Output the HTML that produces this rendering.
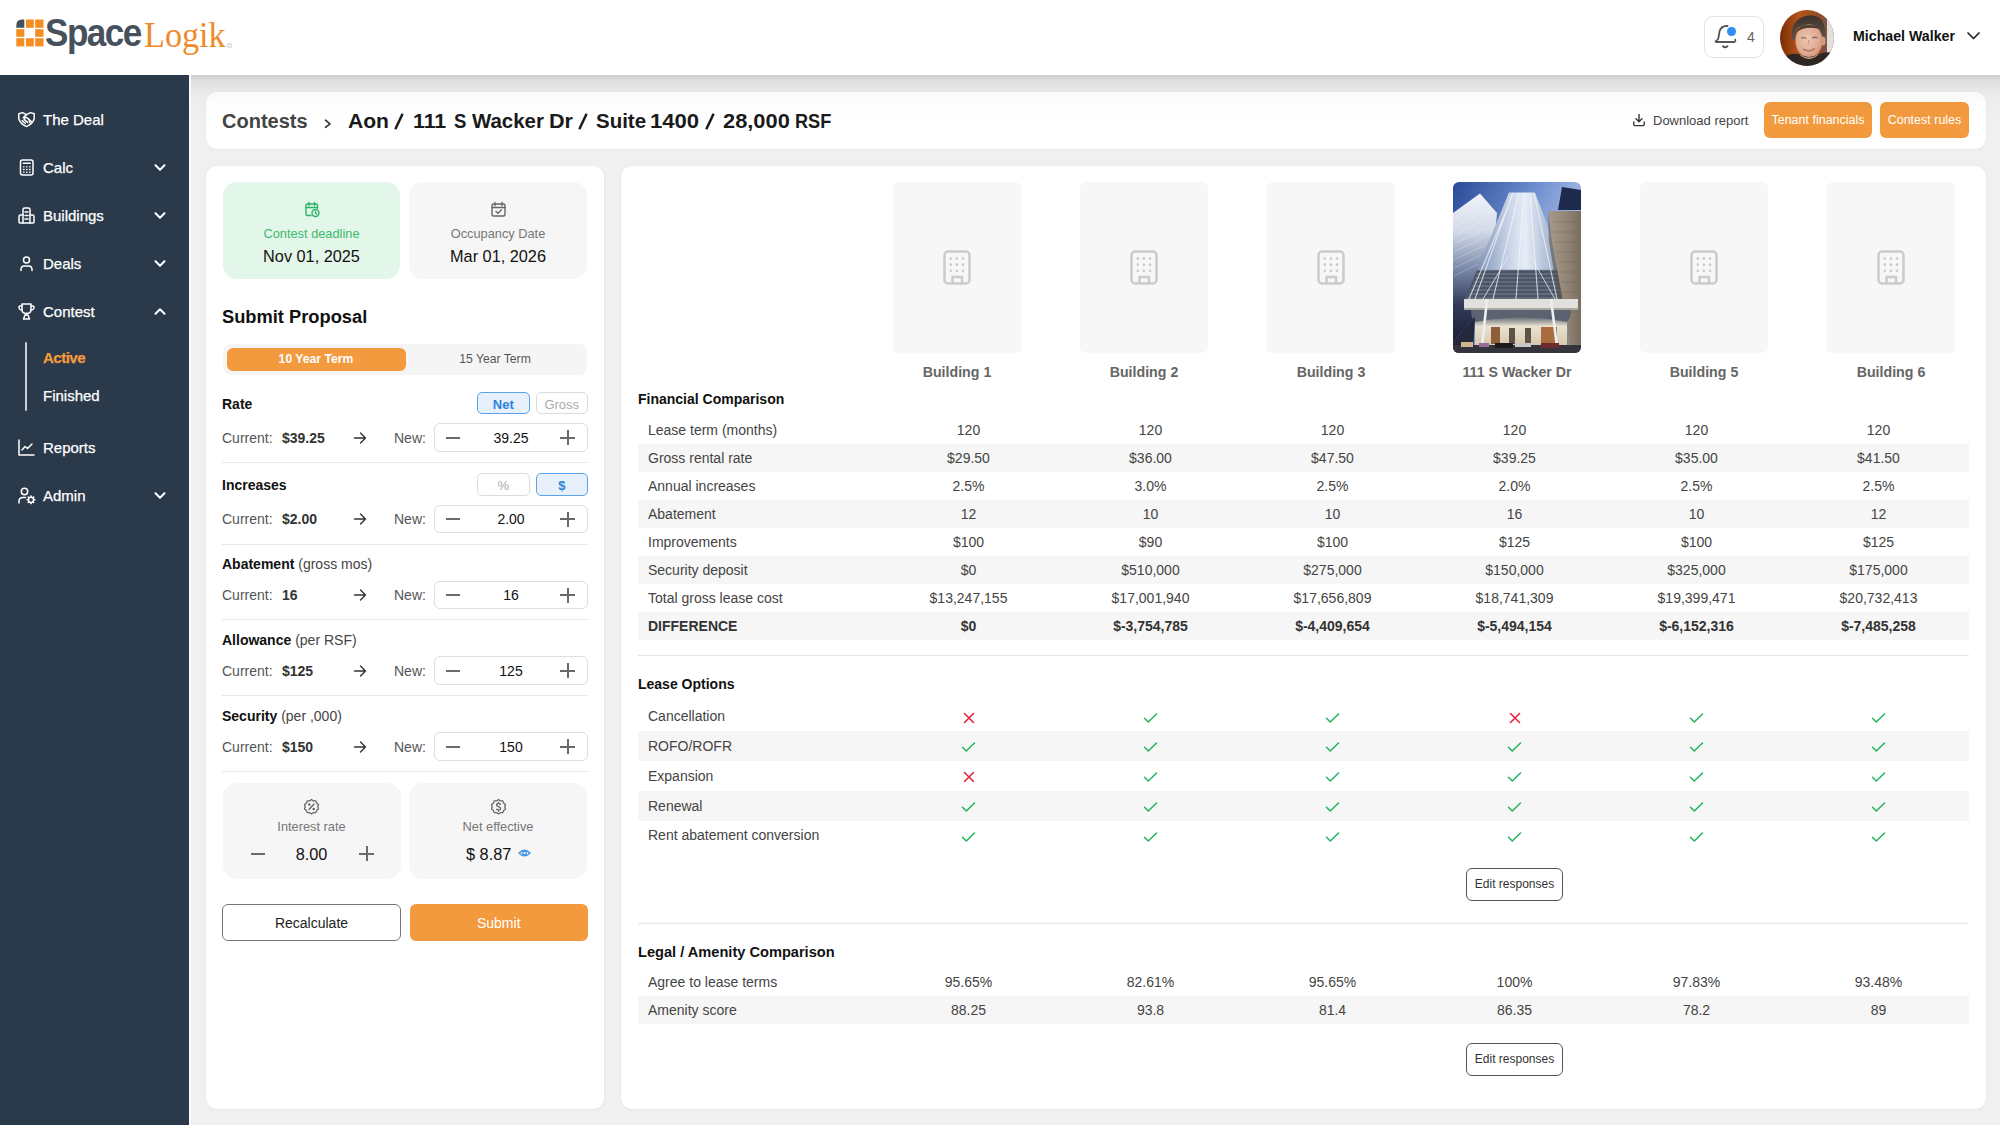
<!DOCTYPE html>
<html><head><meta charset="utf-8">
<style>
*{box-sizing:border-box;margin:0;padding:0}
html,body{width:2000px;height:1125px;overflow:hidden;background:#f0f0f0;font-family:"Liberation Sans",sans-serif;color:#222}
.a{position:absolute}
.t{position:absolute;white-space:nowrap;line-height:1}
#hdr{left:0;top:0;width:2000px;height:75px;background:#fff;z-index:5}
#hsh{left:191px;top:75px;width:1809px;height:46px;z-index:6;pointer-events:none;background:linear-gradient(rgba(0,0,0,.125) 0px,rgba(0,0,0,.12) 2px,rgba(0,0,0,.08) 5px,rgba(0,0,0,.055) 11px,rgba(0,0,0,.033) 16px,rgba(0,0,0,.022) 19px,rgba(0,0,0,.016) 25px,rgba(0,0,0,.008) 33px,rgba(0,0,0,0) 46px)}
#side{left:0;top:75px;width:191px;height:1050px;background:#2a3a4a;border-right:2px solid #fafbfc;z-index:4}
.card{position:absolute;background:#fff;border-radius:10px;box-shadow:0 0 1px rgba(0,0,0,.12),0 1px 3px rgba(0,0,0,.03)}
.nav{position:absolute;left:43px;color:#fff;font-size:15px;line-height:1;white-space:nowrap;-webkit-text-stroke:0.25px currentColor}
.chev{position:absolute;left:154px;width:12px;height:8px}
.ico{position:absolute;left:17px;width:18px;height:18px}
</style></head><body>

<div id="hdr" class="a">
  <!-- logo -->
  <svg class="a" style="left:16px;top:19px" width="28" height="28" viewBox="0 0 28 28">
    <path d="M6 0.5H8.3V8.8H0.3V6.5Q0.3 0.5 6 0.5Z" fill="#46515c"/>
    <g fill="#f68d22">
    <rect x="10" y="0.5" width="7.8" height="8.3"/><rect x="19.2" y="0.5" width="8.3" height="8.3"/>
    <rect x="0.3" y="10.2" width="8" height="7.6"/><rect x="19.2" y="10.2" width="8.3" height="7.6"/>
    <rect x="0.3" y="19.2" width="8" height="8.2"/><rect x="10" y="19.2" width="7.8" height="8.2"/><rect x="19.2" y="19.2" width="8.3" height="8.2"/>
    </g>
  </svg>
  <div class="t" style="left:45px;top:13px;font-size:39px;font-weight:bold;color:#46515c;letter-spacing:-1.7px;transform:scaleX(0.9);transform-origin:0 0">Space</div>
  <div class="t" style="left:144px;top:17px;font-family:'Liberation Serif',serif;font-size:36px;color:#ef8a2b;transform:scaleX(0.95);transform-origin:0 0">Logik</div>
  <svg class="a" style="left:226px;top:42px" width="7" height="7" viewBox="0 0 7 7"><circle cx="3.5" cy="3.5" r="2.3" fill="none" stroke="#c8c8c8" stroke-width="0.8"/><path d="M2.7 4.8V2.3H3.8Q4.5 2.3 4.5 3Q4.5 3.6 3.8 3.6H2.7M3.7 3.6L4.5 4.8" stroke="#d0d0d0" stroke-width="0.5" fill="none"/></svg>

  <!-- notification -->
  <div class="a" style="left:1704px;top:16px;width:60px;height:42px;border:1px solid #e4e4e4;border-radius:9px;"></div>
  <svg class="a" style="left:1700px;top:12px" width="70" height="50" viewBox="0 0 70 50" fill="none" stroke="#555" stroke-width="1.8" stroke-linecap="round" stroke-linejoin="round">
    <path d="M27.5 14Q21 13.6 19.5 19.5L18.6 25.2Q18.2 28.2 16 29Q15 29.9 16.6 30H34Q35.6 29.9 35.3 27.6"/>
    <path d="M23 34.2Q25.2 36.3 27.4 34.2" stroke-width="2"/>
  </svg>
  <div class="a" style="left:1727px;top:27px;width:8.8px;height:9px;border-radius:50%;background:#2f8ff0"></div>
  <div class="t" style="left:1747px;top:30px;font-size:14px;color:#606060">4</div>

  <!-- avatar -->
  <div class="a" style="left:1780px;top:10px;width:54px;height:56px;border-radius:50%;overflow:hidden">
  <svg width="54" height="56" viewBox="0 0 54 56">
   <defs>
    <linearGradient id="wood" x1="0" y1="0" x2="1" y2="0"><stop offset="0" stop-color="#7a2c06"/><stop offset=".35" stop-color="#b4561c"/><stop offset=".8" stop-color="#8a4a2a"/><stop offset="1" stop-color="#6c4636"/></linearGradient>
    <radialGradient id="skin" cx=".45" cy=".45" r=".6"><stop offset="0" stop-color="#efc6b2"/><stop offset=".7" stop-color="#e0ab92"/><stop offset="1" stop-color="#c98d72"/></radialGradient>
    <linearGradient id="hair" x1="0" y1="0" x2="0" y2="1"><stop offset="0" stop-color="#3e322c"/><stop offset="1" stop-color="#5e524a"/></linearGradient>
   </defs>
   <rect width="54" height="56" fill="url(#wood)"/>
   <rect x="46" y="0" width="8" height="56" fill="#e3e0db"/>
   <rect x="43" y="0" width="4" height="46" fill="#7a5646"/>
   <path d="M12 30Q10 14 20 8Q29 3 38 7Q46 11 45 28L42 26Q41 17 33 15Q24 14 17 18Q15 22 15 30Z" fill="url(#hair)"/>
   <ellipse cx="29" cy="31" rx="13.5" ry="16.5" fill="url(#skin)"/>
   <path d="M15.5 24Q18 15 28 15Q38 14 42 22Q40 18 33 18Q24 17 17 22Z" fill="#4a3e37"/>
   <ellipse cx="43" cy="31" rx="2.5" ry="4.5" fill="#d49a80"/>
   <path d="M21 28Q24 27 26.5 28.5M32 28Q35 26.5 37.5 28" stroke="#8a6a60" stroke-width="1.3" fill="none"/>
   <path d="M29 30L28 35" stroke="#c9907a" stroke-width="1" fill="none"/>
   <path d="M23 39Q29 43 35 38.5" stroke="#b87a6c" stroke-width="1.6" fill="none"/>
   <path d="M0 56V49Q9 43 19 44Q29 50 39 44Q47 41 54 43V56Z" fill="#2e2622"/>
   <path d="M19 44Q29 51 39 44L37 46Q29 52 21 46Z" fill="#d9a58c"/>
  </svg>
  </div>
  <div class="t" style="left:1853px;top:29px;font-size:14.2px;font-weight:bold;color:#111">Michael Walker</div>
  <svg class="a" style="left:1966px;top:31px" width="15" height="10" viewBox="0 0 15 10" fill="none" stroke="#222" stroke-width="1.7" stroke-linecap="round" stroke-linejoin="round"><path d="M2 2L7.5 7.5L13 2"/></svg>
</div>

<div id="side" class="a">
<div class="nav" style="top:36.9px;color:#fff;font-weight:normal">The Deal</div><svg class="a" style="left:17px;top:34.9px" width="19" height="19" viewBox="0 0 19 19" fill="none" stroke="#fff" stroke-width="1.5" stroke-linecap="round" stroke-linejoin="round"><path d="M1.8 3.8L5.5 2.6L9.5 4.6L13.5 2.6L17.2 3.8V8.8Q16 13.5 9.5 16.6Q3 13.5 1.8 8.8Z"/><path d="M9.5 4.6L6.3 7.6Q7.6 8.8 9.3 7.3L14.3 11.5M5.2 10.6L8.3 13.3M7.2 9.4L10.6 12.4M11.8 8.9L12.8 12.6"/></svg><div class="nav" style="top:84.9px;color:#fff;font-weight:normal">Calc</div><svg class="a" style="left:17px;top:82.9px" width="19" height="19" viewBox="0 0 19 19" fill="none" stroke="#fff" stroke-width="1.5" stroke-linecap="round" stroke-linejoin="round"><rect x="3.5" y="2" width="12.5" height="15" rx="2"/><path d="M6.3 5.3H13.2"/><path d="M6.5 8.8h.6M9.5 8.8h.6M12.5 8.8h.6M6.5 11.5h.6M9.5 11.5h.6M12.5 11.5h.6M6.5 14.2h.6M9.5 14.2h.6M12.5 14.2h.6" stroke-width="1.3"/></svg><svg class="a" style="left:153px;top:87.9px" width="14" height="9" viewBox="0 0 14 9" fill="none" stroke="#fff" stroke-width="2" stroke-linecap="round" stroke-linejoin="round"><path d="M2.5 2.2L7 6.8L11.5 2.2"/></svg><div class="nav" style="top:132.9px;color:#fff;font-weight:normal">Buildings</div><svg class="a" style="left:17px;top:130.9px" width="19" height="19" viewBox="0 0 19 19" fill="none" stroke="#fff" stroke-width="1.5" stroke-linecap="round" stroke-linejoin="round"><path d="M6 17V3.5Q6 2 7.5 2H11.5Q13 2 13 3.5V17"/><path d="M6 9H3.5Q2 9 2 10.5V16Q2 17 3 17H16Q17 17 17 16V10.5Q17 9 15.5 9H13"/><path d="M8 6H11M8 9.5H11M8 13H11"/></svg><svg class="a" style="left:153px;top:135.9px" width="14" height="9" viewBox="0 0 14 9" fill="none" stroke="#fff" stroke-width="2" stroke-linecap="round" stroke-linejoin="round"><path d="M2.5 2.2L7 6.8L11.5 2.2"/></svg><div class="nav" style="top:180.9px;color:#fff;font-weight:normal">Deals</div><svg class="a" style="left:17px;top:178.9px" width="19" height="19" viewBox="0 0 19 19" fill="none" stroke="#fff" stroke-width="1.5" stroke-linecap="round" stroke-linejoin="round"><circle cx="9.5" cy="6" r="3"/><path d="M4 16.5V15.5Q4 12 7.5 12H11.5Q15 12 15 15.5V16.5"/></svg><svg class="a" style="left:153px;top:183.9px" width="14" height="9" viewBox="0 0 14 9" fill="none" stroke="#fff" stroke-width="2" stroke-linecap="round" stroke-linejoin="round"><path d="M2.5 2.2L7 6.8L11.5 2.2"/></svg><div class="nav" style="top:228.9px;color:#fff;font-weight:normal">Contest</div><svg class="a" style="left:17px;top:226.9px" width="19" height="19" viewBox="0 0 19 19" fill="none" stroke="#fff" stroke-width="1.5" stroke-linecap="round" stroke-linejoin="round"><path d="M5 2H14V7.5Q14 11.5 9.5 11.5Q5 11.5 5 7.5Z"/><path d="M5 4H3Q1.8 4 2 5.5Q2.3 8 5 8M14 4H16Q17.2 4 17 5.5Q16.7 8 14 8"/><path d="M9.5 11.5V13M6.5 17H12.5L11 13H8Z"/></svg><svg class="a" style="left:153px;top:231.9px" width="14" height="9" viewBox="0 0 14 9" fill="none" stroke="#fff" stroke-width="2" stroke-linecap="round" stroke-linejoin="round"><path d="M2.5 6.8L7 2.2L11.5 6.8"/></svg><div class="a" style="left:25px;top:267px;width:2px;height:69px;background:#c9ced4;border-radius:1px"></div><div class="nav" style="top:275.2px;color:#f39a3b;font-weight:bold;letter-spacing:-0.5px">Active</div><div class="nav" style="top:312.5px">Finished</div><div class="nav" style="top:364.9px;color:#fff;font-weight:normal">Reports</div><svg class="a" style="left:17px;top:362.9px" width="19" height="19" viewBox="0 0 19 19" fill="none" stroke="#fff" stroke-width="1.5" stroke-linecap="round" stroke-linejoin="round"><path d="M2 2V17H17"/><path d="M5 12L8 8.5L10.5 10.5L15 6"/></svg><div class="nav" style="top:413.0px;color:#fff;font-weight:normal">Admin</div><svg class="a" style="left:17px;top:411.0px" width="19" height="19" viewBox="0 0 19 19" fill="none" stroke="#fff" stroke-width="1.5" stroke-linecap="round" stroke-linejoin="round"><circle cx="7.5" cy="5.5" r="3.2"/><path d="M2 17V15.5Q2 11.5 6 11.5H8.5"/><circle cx="14" cy="13.8" r="2.6"/><path d="M14 10V10.6M14 17V17.6M10.2 13.8H10.8M17.2 13.8H17.8M11.3 11.1L11.7 11.5M16.3 16.1L16.7 16.5M11.3 16.5L11.7 16.1M16.3 11.5L16.7 11.1" stroke-width="1.6"/></svg><svg class="a" style="left:153px;top:416.0px" width="14" height="9" viewBox="0 0 14 9" fill="none" stroke="#fff" stroke-width="2" stroke-linecap="round" stroke-linejoin="round"><path d="M2.5 2.2L7 6.8L11.5 2.2"/></svg>
</div>

<!-- breadcrumb card -->
<div class="card" style="left:206px;top:92px;width:1780px;height:57px;"></div>
<div class="t" style="left:222px;top:110.5px;font-size:20px;font-weight:bold;color:#444">Contests</div>
<svg class="a" style="left:321px;top:115px" width="12" height="15" viewBox="0 0 12 15" fill="none" stroke="#333" stroke-width="1.7" stroke-linecap="round" stroke-linejoin="round"><path d="M4.5 5.2L9 8.8L4.5 12.3"/></svg>
<div class="t" style="left:347.7px;top:110.5px;font-size:20px;font-weight:bold;color:#1a1a1a;transform:scaleX(1.054);transform-origin:0 0">Aon</div><div class="t" style="left:413.0px;top:110.5px;font-size:20px;font-weight:bold;color:#1a1a1a;transform:scaleX(1.063);transform-origin:0 0">111</div><div class="t" style="left:453.5px;top:110.5px;font-size:20px;font-weight:bold;color:#1a1a1a;transform:scaleX(0.925);transform-origin:0 0">S</div><div class="t" style="left:472.0px;top:110.5px;font-size:20px;font-weight:bold;color:#1a1a1a;transform:scaleX(1.021);transform-origin:0 0">Wacker</div><div class="t" style="left:548.9px;top:110.5px;font-size:20px;font-weight:bold;color:#1a1a1a;transform:scaleX(1.081);transform-origin:0 0">Dr</div><div class="t" style="left:596.2px;top:110.5px;font-size:20px;font-weight:bold;color:#1a1a1a;transform:scaleX(1.023);transform-origin:0 0">Suite</div><div class="t" style="left:650.0px;top:110.5px;font-size:20px;font-weight:bold;color:#1a1a1a;transform:scaleX(1.105);transform-origin:0 0">1400</div><div class="t" style="left:722.8px;top:110.5px;font-size:20px;font-weight:bold;color:#1a1a1a;transform:scaleX(1.092);transform-origin:0 0">28,000</div><div class="t" style="left:794.5px;top:110.5px;font-size:20px;font-weight:bold;color:#1a1a1a;transform:scaleX(0.908);transform-origin:0 0">RSF</div><svg class="a" style="left:394px;top:113px" width="10" height="17" viewBox="0 0 10 17"><path d="M1.3 16.2L8.6 0.8" stroke="#1a1a1a" stroke-width="2.5" stroke-linecap="butt"/></svg><svg class="a" style="left:578px;top:113px" width="10" height="17" viewBox="0 0 10 17"><path d="M1.3 16.2L8.6 0.8" stroke="#1a1a1a" stroke-width="2.5" stroke-linecap="butt"/></svg><svg class="a" style="left:705px;top:113px" width="10" height="17" viewBox="0 0 10 17"><path d="M1.3 16.2L8.6 0.8" stroke="#1a1a1a" stroke-width="2.5" stroke-linecap="butt"/></svg>
<svg class="a" style="left:1632px;top:113px" width="14" height="14" viewBox="0 0 14 14" fill="none" stroke="#333" stroke-width="1.4" stroke-linecap="round" stroke-linejoin="round"><path d="M7 1.5V8.5M4 5.8L7 8.8L10 5.8M1.8 9V11.6Q1.8 12.6 2.8 12.6H11.2Q12.2 12.6 12.2 11.6V9"/></svg>
<div class="t" style="left:1653px;top:113.5px;font-size:13px;color:#444">Download report</div>
<div class="a" style="left:1764px;top:102px;width:108px;height:36px;border-radius:6px;background:#f39a3e"></div>
<div class="t" style="left:1764px;top:113.5px;width:108px;text-align:center;font-size:12.5px;color:#fff">Tenant financials</div>
<div class="a" style="left:1880px;top:102px;width:89px;height:36px;border-radius:6px;background:#f39a3e"></div>
<div class="t" style="left:1880px;top:113.5px;width:89px;text-align:center;font-size:12.5px;color:#fff">Contest rules</div>

<!-- left card -->
<div class="card" style="left:206px;top:166px;width:398px;height:943px;"></div>

<div class="a" style="left:223px;top:182px;width:177px;height:97px;background:#e3f6ea;border-radius:14px"></div>
<div class="a" style="left:409px;top:182px;width:178px;height:97px;background:#f6f6f6;border-radius:14px"></div>
<svg class="a" style="left:304px;top:201px" width="17" height="17" viewBox="0 0 17 17" fill="none" stroke="#2fb463" stroke-width="1.4" stroke-linecap="round" stroke-linejoin="round"><path d="M7 14.5H3.5Q2 14.5 2 13V4.5Q2 3 3.5 3H12Q13.5 3 13.5 4.5V7"/><path d="M5 1.5V4.5M10.5 1.5V4.5M2 6.5H13.5"/><circle cx="11.5" cy="12" r="3.5"/><path d="M11.5 10.5V12L12.5 12.8"/></svg>
<svg class="a" style="left:490px;top:201px" width="17" height="17" viewBox="0 0 17 17" fill="none" stroke="#666" stroke-width="1.4" stroke-linecap="round" stroke-linejoin="round"><rect x="2" y="3" width="13" height="12" rx="1.5"/><path d="M5 1.5V4.5M12 1.5V4.5M2 6.5H15M6 10.5L8 12.3L11.3 9"/></svg>
<div class="t" style="left:223px;width:177px;text-align:center;top:228.2px;font-size:12.8px;color:#3cba6b;font-weight:normal;">Contest deadline</div>
<div class="t" style="left:409px;width:178px;text-align:center;top:228.2px;font-size:12.8px;color:#777;font-weight:normal;">Occupancy Date</div>
<div class="t" style="left:223px;width:177px;text-align:center;top:248.0px;font-size:16.3px;color:#111;font-weight:normal;">Nov 01, 2025</div>
<div class="t" style="left:409px;width:178px;text-align:center;top:248.0px;font-size:16.3px;color:#111;font-weight:normal;">Mar 01, 2026</div>
<div class="t" style="left:222px;top:308.4px;font-size:18.3px;color:#111;font-weight:bold;">Submit Proposal</div>
<div class="a" style="left:223px;top:344px;width:364px;height:31px;background:#f5f5f5;border-radius:8px"></div>
<div class="a" style="left:226.5px;top:347.5px;width:179px;height:23px;background:#f39a3e;border-radius:6px"></div>
<div class="t" style="left:226px;width:180px;text-align:center;top:353.1px;font-size:12.2px;color:#fff;font-weight:bold;">10 Year Term</div>
<div class="t" style="left:406px;width:178px;text-align:center;top:353.1px;font-size:12.2px;color:#555;font-weight:normal;">15 Year Term</div>
<div class="t" style="left:222px;top:397.0px;font-size:14px;color:#111;font-weight:bold;">Rate</div>
<div class="a" style="left:477px;top:391.8px;width:52.5px;height:22.5px;background:#e7f0fb;border:1.5px solid #5aa2ea;border-radius:5px"></div>
<div class="t" style="left:477px;width:52.5px;text-align:center;top:397.5px;font-size:13px;color:#2b83dd;font-weight:bold;">Net</div>
<div class="a" style="left:535.5px;top:391.8px;width:52.5px;height:22.5px;background:#fff;border:1px solid #dcdcdc;border-radius:5px"></div>
<div class="t" style="left:535.5px;width:52.5px;text-align:center;top:397.5px;font-size:13px;color:#aaa;font-weight:normal;">Gross</div>
<div class="t" style="left:222px;top:431.0px;font-size:14px;color:#555;font-weight:normal;">Current:</div>
<div class="t" style="left:282px;top:431.0px;font-size:14px;color:#333;font-weight:bold;">$39.25</div>
<svg class="a" style="left:353px;top:431.0px" width="14" height="14" viewBox="0 0 14 14" fill="none" stroke="#333" stroke-width="1.4" stroke-linecap="round" stroke-linejoin="round"><path d="M1.5 7H12.5M7.5 2L12.5 7L7.5 12"/></svg>
<div class="t" style="left:394px;top:431.0px;font-size:14px;color:#555;font-weight:normal;">New:</div>
<div class="a" style="left:434px;top:423px;width:154px;height:28.5px;border:1px solid #dedede;border-radius:6px;background:#fff"></div>
<div class="a" style="left:446px;top:437px;width:14px;height:1.5px;background:#6a6a6a"></div>
<div class="t" style="left:434px;width:154px;text-align:center;top:431.0px;font-size:14px;color:#111;font-weight:normal;">39.25</div>
<div class="a" style="left:560px;top:437px;width:15px;height:1.5px;background:#6a6a6a"></div><div class="a" style="left:567px;top:430px;width:1.5px;height:15px;background:#6a6a6a"></div>
<div class="a" style="left:222px;top:462px;width:366px;height:1px;background:#e9e9e9"></div>
<div class="t" style="left:222px;top:478.3px;font-size:14px;color:#111;font-weight:bold;">Increases</div>
<div class="a" style="left:477px;top:473.4px;width:52.5px;height:22.5px;background:#fff;border:1px solid #dcdcdc;border-radius:5px"></div>
<div class="t" style="left:477px;width:52.5px;text-align:center;top:478.8px;font-size:13px;color:#aaa;font-weight:normal;">%</div>
<div class="a" style="left:535.5px;top:473.4px;width:52.5px;height:22.5px;background:#e7f0fb;border:1.5px solid #5aa2ea;border-radius:5px"></div>
<div class="t" style="left:535.5px;width:52.5px;text-align:center;top:478.8px;font-size:13px;color:#2b83dd;font-weight:bold;">$</div>
<div class="t" style="left:222px;top:512.3px;font-size:14px;color:#555;font-weight:normal;">Current:</div>
<div class="t" style="left:282px;top:512.3px;font-size:14px;color:#333;font-weight:bold;">$2.00</div>
<svg class="a" style="left:353px;top:512.3px" width="14" height="14" viewBox="0 0 14 14" fill="none" stroke="#333" stroke-width="1.4" stroke-linecap="round" stroke-linejoin="round"><path d="M1.5 7H12.5M7.5 2L12.5 7L7.5 12"/></svg>
<div class="t" style="left:394px;top:512.3px;font-size:14px;color:#555;font-weight:normal;">New:</div>
<div class="a" style="left:434px;top:504.5px;width:154px;height:28.5px;border:1px solid #dedede;border-radius:6px;background:#fff"></div>
<div class="a" style="left:446px;top:518px;width:14px;height:1.5px;background:#6a6a6a"></div>
<div class="t" style="left:434px;width:154px;text-align:center;top:512.3px;font-size:14px;color:#111;font-weight:normal;">2.00</div>
<div class="a" style="left:560px;top:518px;width:15px;height:1.5px;background:#6a6a6a"></div><div class="a" style="left:567px;top:512px;width:1.5px;height:15px;background:#6a6a6a"></div>
<div class="a" style="left:222px;top:543.5px;width:366px;height:1px;background:#e9e9e9"></div>
<div class="t" style="left:222px;top:557.3px;font-size:14px;color:#111"><b>Abatement</b> <span style="color:#444">(gross mos)</span></div>
<div class="t" style="left:222px;top:588.2px;font-size:14px;color:#555;font-weight:normal;">Current:</div>
<div class="t" style="left:282px;top:588.2px;font-size:14px;color:#333;font-weight:bold;">16</div>
<svg class="a" style="left:353px;top:588.2px" width="14" height="14" viewBox="0 0 14 14" fill="none" stroke="#333" stroke-width="1.4" stroke-linecap="round" stroke-linejoin="round"><path d="M1.5 7H12.5M7.5 2L12.5 7L7.5 12"/></svg>
<div class="t" style="left:394px;top:588.2px;font-size:14px;color:#555;font-weight:normal;">New:</div>
<div class="a" style="left:434px;top:580.5px;width:154px;height:28.5px;border:1px solid #dedede;border-radius:6px;background:#fff"></div>
<div class="a" style="left:446px;top:594px;width:14px;height:1.5px;background:#6a6a6a"></div>
<div class="t" style="left:434px;width:154px;text-align:center;top:588.2px;font-size:14px;color:#111;font-weight:normal;">16</div>
<div class="a" style="left:560px;top:594px;width:15px;height:1.5px;background:#6a6a6a"></div><div class="a" style="left:567px;top:588px;width:1.5px;height:15px;background:#6a6a6a"></div>
<div class="a" style="left:222px;top:619px;width:366px;height:1px;background:#e9e9e9"></div>
<div class="t" style="left:222px;top:633.2px;font-size:14px;color:#111"><b>Allowance</b> <span style="color:#444">(per RSF)</span></div>
<div class="t" style="left:222px;top:663.5px;font-size:14px;color:#555;font-weight:normal;">Current:</div>
<div class="t" style="left:282px;top:663.5px;font-size:14px;color:#333;font-weight:bold;">$125</div>
<svg class="a" style="left:353px;top:663.5px" width="14" height="14" viewBox="0 0 14 14" fill="none" stroke="#333" stroke-width="1.4" stroke-linecap="round" stroke-linejoin="round"><path d="M1.5 7H12.5M7.5 2L12.5 7L7.5 12"/></svg>
<div class="t" style="left:394px;top:663.5px;font-size:14px;color:#555;font-weight:normal;">New:</div>
<div class="a" style="left:434px;top:656px;width:154px;height:28.5px;border:1px solid #dedede;border-radius:6px;background:#fff"></div>
<div class="a" style="left:446px;top:670px;width:14px;height:1.5px;background:#6a6a6a"></div>
<div class="t" style="left:434px;width:154px;text-align:center;top:663.5px;font-size:14px;color:#111;font-weight:normal;">125</div>
<div class="a" style="left:560px;top:670px;width:15px;height:1.5px;background:#6a6a6a"></div><div class="a" style="left:567px;top:663px;width:1.5px;height:15px;background:#6a6a6a"></div>
<div class="a" style="left:222px;top:695px;width:366px;height:1px;background:#e9e9e9"></div>
<div class="t" style="left:222px;top:708.9px;font-size:14px;color:#111"><b>Security</b> <span style="color:#444">(per ,000)</span></div>
<div class="t" style="left:222px;top:739.5px;font-size:14px;color:#555;font-weight:normal;">Current:</div>
<div class="t" style="left:282px;top:739.5px;font-size:14px;color:#333;font-weight:bold;">$150</div>
<svg class="a" style="left:353px;top:739.5px" width="14" height="14" viewBox="0 0 14 14" fill="none" stroke="#333" stroke-width="1.4" stroke-linecap="round" stroke-linejoin="round"><path d="M1.5 7H12.5M7.5 2L12.5 7L7.5 12"/></svg>
<div class="t" style="left:394px;top:739.5px;font-size:14px;color:#555;font-weight:normal;">New:</div>
<div class="a" style="left:434px;top:732px;width:154px;height:28.5px;border:1px solid #dedede;border-radius:6px;background:#fff"></div>
<div class="a" style="left:446px;top:746px;width:14px;height:1.5px;background:#6a6a6a"></div>
<div class="t" style="left:434px;width:154px;text-align:center;top:739.5px;font-size:14px;color:#111;font-weight:normal;">150</div>
<div class="a" style="left:560px;top:746px;width:15px;height:1.5px;background:#6a6a6a"></div><div class="a" style="left:567px;top:739px;width:1.5px;height:15px;background:#6a6a6a"></div>
<div class="a" style="left:222px;top:771px;width:366px;height:1px;background:#e9e9e9"></div>
<div class="a" style="left:223px;top:782.5px;width:177.5px;height:96.5px;background:#f6f6f6;border-radius:14px"></div>
<div class="a" style="left:409px;top:782.5px;width:178px;height:96.5px;background:#f6f6f6;border-radius:14px"></div>
<svg class="a" style="left:303px;top:798px" width="17" height="17" viewBox="0 0 17 17" fill="none" stroke="#666" stroke-width="1.3" stroke-linecap="round" stroke-linejoin="round"><path d="M8.5 1.5L10.4 2.9L12.8 2.9L13.6 5.1L15.5 6.5L14.8 8.8L15.5 11L13.6 12.4L12.8 14.6L10.4 14.6L8.5 16L6.6 14.6L4.2 14.6L3.4 12.4L1.5 11L2.2 8.8L1.5 6.5L3.4 5.1L4.2 2.9L6.6 2.9Z"/><path d="M6 11.5L11 6"/><circle cx="6.3" cy="6.5" r=".6" fill="#666"/><circle cx="10.7" cy="11" r=".6" fill="#666"/></svg>
<svg class="a" style="left:490px;top:798px" width="17" height="17" viewBox="0 0 17 17" fill="none" stroke="#666" stroke-width="1.3" stroke-linecap="round" stroke-linejoin="round"><path d="M8.5 1.5L10.4 2.9L12.8 2.9L13.6 5.1L15.5 6.5L14.8 8.8L15.5 11L13.6 12.4L12.8 14.6L10.4 14.6L8.5 16L6.6 14.6L4.2 14.6L3.4 12.4L1.5 11L2.2 8.8L1.5 6.5L3.4 5.1L4.2 2.9L6.6 2.9Z"/><path d="M10.5 6.3Q10 5.5 8.5 5.5Q6.5 5.5 6.5 7Q6.5 8.3 8.5 8.6Q10.5 9 10.5 10.4Q10.5 12 8.5 12Q7 12 6.5 11.2M8.5 4.3V5.5M8.5 12V13.2"/></svg>
<div class="t" style="left:223px;width:177px;text-align:center;top:821.4px;font-size:12.8px;color:#777;font-weight:normal;">Interest rate</div>
<div class="t" style="left:409px;width:178px;text-align:center;top:821.4px;font-size:12.8px;color:#777;font-weight:normal;">Net effective</div>
<div class="t" style="left:223px;width:177px;text-align:center;top:845.6px;font-size:16.3px;color:#111;font-weight:normal;">8.00</div>
<div class="a" style="left:251px;top:853px;width:14px;height:1.5px;background:#6a6a6a"></div>
<div class="a" style="left:359px;top:853px;width:15px;height:1.5px;background:#6a6a6a"></div><div class="a" style="left:366px;top:846px;width:1.5px;height:15px;background:#6a6a6a"></div>
<div class="t" style="left:466px;top:845.6px;font-size:16.3px;color:#111;font-weight:normal;">$ 8.87</div>
<svg class="a" style="left:518px;top:847px" width="13" height="12" viewBox="0 0 13 12" fill="none" stroke="#3d93e6" stroke-width="1.3"><path d="M1 6Q6.5 0.5 12 6Q6.5 11.5 1 6Z"/><circle cx="6.5" cy="6" r="1.8"/></svg>
<div class="a" style="left:222px;top:904px;width:179px;height:37px;border:1.5px solid #777;border-radius:6px;background:#fff"></div>
<div class="t" style="left:222px;width:179px;text-align:center;top:915.6px;font-size:14px;color:#222;font-weight:normal;">Recalculate</div>
<div class="a" style="left:410px;top:904px;width:177.5px;height:37px;background:#f39a3e;border-radius:6px"></div>
<div class="t" style="left:410px;width:177.5px;text-align:center;top:915.6px;font-size:14px;color:#fff;font-weight:normal;">Submit</div>
<!-- right card -->
<div class="card" style="left:621px;top:166px;width:1365px;height:943px;"></div>

<div class="a" style="left:893px;top:182px;width:128px;height:171px;background:#f7f7f7;border-radius:6px"></div>
<svg class="a" style="left:943px;top:250px" width="29" height="36" viewBox="0 0 29 36" fill="none" stroke="#cbcbcb" stroke-width="2.5" stroke-linejoin="round"><rect x="1.5" y="1.5" width="25" height="32" rx="3.5"/><path d="M9.5 33.5V27H19V33.5"/><g fill="#cbcbcb" stroke="none"><circle cx="7.8" cy="8.6" r="1.35"/><circle cx="13.9" cy="8.6" r="1.35"/><circle cx="20" cy="8.6" r="1.35"/><circle cx="7.8" cy="14.7" r="1.35"/><circle cx="13.9" cy="14.7" r="1.35"/><circle cx="20" cy="14.7" r="1.35"/><circle cx="7.8" cy="20.8" r="1.35"/><circle cx="13.9" cy="20.8" r="1.35"/><circle cx="20" cy="20.8" r="1.35"/></g></svg>
<div class="t" style="left:853px;width:208px;text-align:center;top:364.5px;font-size:14.2px;color:#666;font-weight:bold;">Building 1</div>
<div class="a" style="left:1080px;top:182px;width:128px;height:171px;background:#f7f7f7;border-radius:6px"></div>
<svg class="a" style="left:1130px;top:250px" width="29" height="36" viewBox="0 0 29 36" fill="none" stroke="#cbcbcb" stroke-width="2.5" stroke-linejoin="round"><rect x="1.5" y="1.5" width="25" height="32" rx="3.5"/><path d="M9.5 33.5V27H19V33.5"/><g fill="#cbcbcb" stroke="none"><circle cx="7.8" cy="8.6" r="1.35"/><circle cx="13.9" cy="8.6" r="1.35"/><circle cx="20" cy="8.6" r="1.35"/><circle cx="7.8" cy="14.7" r="1.35"/><circle cx="13.9" cy="14.7" r="1.35"/><circle cx="20" cy="14.7" r="1.35"/><circle cx="7.8" cy="20.8" r="1.35"/><circle cx="13.9" cy="20.8" r="1.35"/><circle cx="20" cy="20.8" r="1.35"/></g></svg>
<div class="t" style="left:1040px;width:208px;text-align:center;top:364.5px;font-size:14.2px;color:#666;font-weight:bold;">Building 2</div>
<div class="a" style="left:1267px;top:182px;width:128px;height:171px;background:#f7f7f7;border-radius:6px"></div>
<svg class="a" style="left:1317px;top:250px" width="29" height="36" viewBox="0 0 29 36" fill="none" stroke="#cbcbcb" stroke-width="2.5" stroke-linejoin="round"><rect x="1.5" y="1.5" width="25" height="32" rx="3.5"/><path d="M9.5 33.5V27H19V33.5"/><g fill="#cbcbcb" stroke="none"><circle cx="7.8" cy="8.6" r="1.35"/><circle cx="13.9" cy="8.6" r="1.35"/><circle cx="20" cy="8.6" r="1.35"/><circle cx="7.8" cy="14.7" r="1.35"/><circle cx="13.9" cy="14.7" r="1.35"/><circle cx="20" cy="14.7" r="1.35"/><circle cx="7.8" cy="20.8" r="1.35"/><circle cx="13.9" cy="20.8" r="1.35"/><circle cx="20" cy="20.8" r="1.35"/></g></svg>
<div class="t" style="left:1227px;width:208px;text-align:center;top:364.5px;font-size:14.2px;color:#666;font-weight:bold;">Building 3</div>
<div class="a" style="left:1453px;top:182px;width:128px;height:171px;border-radius:6px;overflow:hidden">
<svg width="128" height="171" viewBox="0 0 128 171">
<defs>
<linearGradient id="sky" x1="0" y1="0" x2="1" y2=".6"><stop offset="0" stop-color="#2a4a98"/><stop offset=".5" stop-color="#6f8fd0"/><stop offset="1" stop-color="#c9d8ee"/></linearGradient>
<linearGradient id="lt" x1="0" y1="0" x2="0" y2="1"><stop offset="0" stop-color="#f1f4f9"/><stop offset=".25" stop-color="#d3dbe8"/><stop offset=".5" stop-color="#7d8cab"/><stop offset=".75" stop-color="#2f3a58"/><stop offset="1" stop-color="#1a2034"/></linearGradient>
<linearGradient id="ct" x1="0" y1="0" x2="1" y2="0"><stop offset="0" stop-color="#7f93b8"/><stop offset=".35" stop-color="#c6d3e6"/><stop offset=".55" stop-color="#e6edf6"/><stop offset=".8" stop-color="#aebdd6"/><stop offset="1" stop-color="#8295b8"/></linearGradient>
<linearGradient id="rt" x1="0" y1="0" x2="1" y2="0"><stop offset="0" stop-color="#a89a8a"/><stop offset=".5" stop-color="#968878"/><stop offset="1" stop-color="#7a6e62"/></linearGradient>
<linearGradient id="lob" x1="0" y1="0" x2="0" y2="1"><stop offset="0" stop-color="#6a6e78"/><stop offset=".3" stop-color="#e9e2d2"/><stop offset="1" stop-color="#d6c6a8"/></linearGradient>
</defs>
<rect width="128" height="171" fill="url(#sky)"/>

<path d="M0 31L27 11.5L44 31L42 55L33 95L22 135L0 160Z" fill="url(#lt)"/>
<path d="M1 38L28 20M1 46L31 28M1 54L33 37M1 62L33 46M1 70L32 55M1 78L30 64M1 86L28 73M1 94L25 82" stroke="#fff" stroke-opacity=".3" stroke-width=".8"/>
<path d="M56 10.5H82L112 88H24Z" fill="url(#ct)"/>
<path d="M24 88H112L123 117H12Z" fill="#4a5466"/>
<path d="M25.0 88H110.0" stroke="#8e98a8" stroke-width=".7"/><path d="M23.5 92H111.5" stroke="#8e98a8" stroke-width=".7"/><path d="M22.0 96H113.0" stroke="#8e98a8" stroke-width=".7"/><path d="M20.5 100H114.5" stroke="#8e98a8" stroke-width=".7"/><path d="M18.9 104H116.1" stroke="#8e98a8" stroke-width=".7"/><path d="M17.4 108H117.6" stroke="#8e98a8" stroke-width=".7"/><path d="M15.9 112H119.1" stroke="#8e98a8" stroke-width=".7"/><path d="M14.4 116H120.6" stroke="#8e98a8" stroke-width=".7"/>
<path d="M22 117L60 11M40 117L66 11M63 117L71 11M85 117L77 11M104 117L81 11M16 117L57 20" stroke="#f4f7fb" stroke-opacity=".75" stroke-width="1.1"/>
<path d="M30 117L55 75M102 117L78 75" stroke="#e8edf4" stroke-opacity=".8" stroke-width="1"/>
<path d="M95 29H128V171H118L110 120L99 60Z" fill="url(#rt)"/>
<path d="M99 40H128M100 50H128M102 60H128M104 70H128M106 80H128M107 90H128M108 100H128M110 110H128M111 120H128M112 130H128" stroke="#6d6256" stroke-opacity=".45" stroke-width=".8"/>
<path d="M95 29L99 60L110 120L118 171H114L106 120L96 60Z" fill="#5c5248" opacity=".6"/>
<path d="M105 28L109 5L128 8V28Z" fill="#1d2a4d"/>
<rect x="11" y="117" width="114" height="10" fill="#e2e0dc"/>
<rect x="11" y="126" width="114" height="2" fill="#a9a7a4"/>
<path d="M18 128H118Q118 138 112 141Q68 133 24 141Q18 138 18 128Z" fill="#5c6270"/>
<path d="M22 140Q68 131 114 140V165H22Z" fill="url(#lob)"/>
<rect x="38" y="145" width="9" height="17" fill="#8e5e3a"/>
<rect x="56" y="146" width="6" height="16" fill="#5e5246"/>
<rect x="72" y="146" width="6" height="16" fill="#5e5246"/>
<rect x="88" y="145" width="16" height="17" fill="#a86c3e"/>
<path d="M34 117L29 165M98 117L104 165" stroke="#eceef2" stroke-width="2.6"/>
<path d="M0 160L22 135L20 171H0Z" fill="#23283a"/>
<rect x="0" y="163" width="128" height="8" fill="#34353c"/>
<rect x="8" y="160" width="12" height="5" fill="#cdb690"/>
<rect x="26" y="161" width="10" height="4" fill="#9a6a9a"/>
<rect x="42" y="161" width="18" height="5" fill="#1c1c20"/>
<rect x="62" y="161" width="16" height="4" fill="#c8c8cc"/>
<rect x="88" y="161" width="18" height="5" fill="#6e2a2e"/>
</svg></div>
<div class="t" style="left:1413px;width:208px;text-align:center;top:364.5px;font-size:14.2px;color:#666;font-weight:bold;">111 S Wacker Dr</div>
<div class="a" style="left:1640px;top:182px;width:128px;height:171px;background:#f7f7f7;border-radius:6px"></div>
<svg class="a" style="left:1690px;top:250px" width="29" height="36" viewBox="0 0 29 36" fill="none" stroke="#cbcbcb" stroke-width="2.5" stroke-linejoin="round"><rect x="1.5" y="1.5" width="25" height="32" rx="3.5"/><path d="M9.5 33.5V27H19V33.5"/><g fill="#cbcbcb" stroke="none"><circle cx="7.8" cy="8.6" r="1.35"/><circle cx="13.9" cy="8.6" r="1.35"/><circle cx="20" cy="8.6" r="1.35"/><circle cx="7.8" cy="14.7" r="1.35"/><circle cx="13.9" cy="14.7" r="1.35"/><circle cx="20" cy="14.7" r="1.35"/><circle cx="7.8" cy="20.8" r="1.35"/><circle cx="13.9" cy="20.8" r="1.35"/><circle cx="20" cy="20.8" r="1.35"/></g></svg>
<div class="t" style="left:1600px;width:208px;text-align:center;top:364.5px;font-size:14.2px;color:#666;font-weight:bold;">Building 5</div>
<div class="a" style="left:1827px;top:182px;width:128px;height:171px;background:#f7f7f7;border-radius:6px"></div>
<svg class="a" style="left:1877px;top:250px" width="29" height="36" viewBox="0 0 29 36" fill="none" stroke="#cbcbcb" stroke-width="2.5" stroke-linejoin="round"><rect x="1.5" y="1.5" width="25" height="32" rx="3.5"/><path d="M9.5 33.5V27H19V33.5"/><g fill="#cbcbcb" stroke="none"><circle cx="7.8" cy="8.6" r="1.35"/><circle cx="13.9" cy="8.6" r="1.35"/><circle cx="20" cy="8.6" r="1.35"/><circle cx="7.8" cy="14.7" r="1.35"/><circle cx="13.9" cy="14.7" r="1.35"/><circle cx="20" cy="14.7" r="1.35"/><circle cx="7.8" cy="20.8" r="1.35"/><circle cx="13.9" cy="20.8" r="1.35"/><circle cx="20" cy="20.8" r="1.35"/></g></svg>
<div class="t" style="left:1787px;width:208px;text-align:center;top:364.5px;font-size:14.2px;color:#666;font-weight:bold;">Building 6</div>
<div class="t" style="left:638px;top:391.5px;font-size:14px;color:#111;font-weight:bold;">Financial Comparison</div>
<div class="t" style="left:648px;top:423.0px;font-size:14px;color:#444;font-weight:normal;">Lease term (months)</div>
<div class="t" style="left:877.5px;width:182.0px;text-align:center;top:423.0px;font-size:14px;color:#444;font-weight:normal;">120</div>
<div class="t" style="left:1059.5px;width:182.0px;text-align:center;top:423.0px;font-size:14px;color:#444;font-weight:normal;">120</div>
<div class="t" style="left:1241.5px;width:182.0px;text-align:center;top:423.0px;font-size:14px;color:#444;font-weight:normal;">120</div>
<div class="t" style="left:1423.5px;width:182.0px;text-align:center;top:423.0px;font-size:14px;color:#444;font-weight:normal;">120</div>
<div class="t" style="left:1605.5px;width:182.0px;text-align:center;top:423.0px;font-size:14px;color:#444;font-weight:normal;">120</div>
<div class="t" style="left:1787.5px;width:182.0px;text-align:center;top:423.0px;font-size:14px;color:#444;font-weight:normal;">120</div>
<div class="a" style="left:638px;top:444px;width:1331px;height:28px;background:#f6f6f6"></div>
<div class="t" style="left:648px;top:451.0px;font-size:14px;color:#444;font-weight:normal;">Gross rental rate</div>
<div class="t" style="left:877.5px;width:182.0px;text-align:center;top:451.0px;font-size:14px;color:#444;font-weight:normal;">$29.50</div>
<div class="t" style="left:1059.5px;width:182.0px;text-align:center;top:451.0px;font-size:14px;color:#444;font-weight:normal;">$36.00</div>
<div class="t" style="left:1241.5px;width:182.0px;text-align:center;top:451.0px;font-size:14px;color:#444;font-weight:normal;">$47.50</div>
<div class="t" style="left:1423.5px;width:182.0px;text-align:center;top:451.0px;font-size:14px;color:#444;font-weight:normal;">$39.25</div>
<div class="t" style="left:1605.5px;width:182.0px;text-align:center;top:451.0px;font-size:14px;color:#444;font-weight:normal;">$35.00</div>
<div class="t" style="left:1787.5px;width:182.0px;text-align:center;top:451.0px;font-size:14px;color:#444;font-weight:normal;">$41.50</div>
<div class="t" style="left:648px;top:479.0px;font-size:14px;color:#444;font-weight:normal;">Annual increases</div>
<div class="t" style="left:877.5px;width:182.0px;text-align:center;top:479.0px;font-size:14px;color:#444;font-weight:normal;">2.5%</div>
<div class="t" style="left:1059.5px;width:182.0px;text-align:center;top:479.0px;font-size:14px;color:#444;font-weight:normal;">3.0%</div>
<div class="t" style="left:1241.5px;width:182.0px;text-align:center;top:479.0px;font-size:14px;color:#444;font-weight:normal;">2.5%</div>
<div class="t" style="left:1423.5px;width:182.0px;text-align:center;top:479.0px;font-size:14px;color:#444;font-weight:normal;">2.0%</div>
<div class="t" style="left:1605.5px;width:182.0px;text-align:center;top:479.0px;font-size:14px;color:#444;font-weight:normal;">2.5%</div>
<div class="t" style="left:1787.5px;width:182.0px;text-align:center;top:479.0px;font-size:14px;color:#444;font-weight:normal;">2.5%</div>
<div class="a" style="left:638px;top:500px;width:1331px;height:28px;background:#f6f6f6"></div>
<div class="t" style="left:648px;top:507.0px;font-size:14px;color:#444;font-weight:normal;">Abatement</div>
<div class="t" style="left:877.5px;width:182.0px;text-align:center;top:507.0px;font-size:14px;color:#444;font-weight:normal;">12</div>
<div class="t" style="left:1059.5px;width:182.0px;text-align:center;top:507.0px;font-size:14px;color:#444;font-weight:normal;">10</div>
<div class="t" style="left:1241.5px;width:182.0px;text-align:center;top:507.0px;font-size:14px;color:#444;font-weight:normal;">10</div>
<div class="t" style="left:1423.5px;width:182.0px;text-align:center;top:507.0px;font-size:14px;color:#444;font-weight:normal;">16</div>
<div class="t" style="left:1605.5px;width:182.0px;text-align:center;top:507.0px;font-size:14px;color:#444;font-weight:normal;">10</div>
<div class="t" style="left:1787.5px;width:182.0px;text-align:center;top:507.0px;font-size:14px;color:#444;font-weight:normal;">12</div>
<div class="t" style="left:648px;top:535.0px;font-size:14px;color:#444;font-weight:normal;">Improvements</div>
<div class="t" style="left:877.5px;width:182.0px;text-align:center;top:535.0px;font-size:14px;color:#444;font-weight:normal;">$100</div>
<div class="t" style="left:1059.5px;width:182.0px;text-align:center;top:535.0px;font-size:14px;color:#444;font-weight:normal;">$90</div>
<div class="t" style="left:1241.5px;width:182.0px;text-align:center;top:535.0px;font-size:14px;color:#444;font-weight:normal;">$100</div>
<div class="t" style="left:1423.5px;width:182.0px;text-align:center;top:535.0px;font-size:14px;color:#444;font-weight:normal;">$125</div>
<div class="t" style="left:1605.5px;width:182.0px;text-align:center;top:535.0px;font-size:14px;color:#444;font-weight:normal;">$100</div>
<div class="t" style="left:1787.5px;width:182.0px;text-align:center;top:535.0px;font-size:14px;color:#444;font-weight:normal;">$125</div>
<div class="a" style="left:638px;top:556px;width:1331px;height:28px;background:#f6f6f6"></div>
<div class="t" style="left:648px;top:563.0px;font-size:14px;color:#444;font-weight:normal;">Security deposit</div>
<div class="t" style="left:877.5px;width:182.0px;text-align:center;top:563.0px;font-size:14px;color:#444;font-weight:normal;">$0</div>
<div class="t" style="left:1059.5px;width:182.0px;text-align:center;top:563.0px;font-size:14px;color:#444;font-weight:normal;">$510,000</div>
<div class="t" style="left:1241.5px;width:182.0px;text-align:center;top:563.0px;font-size:14px;color:#444;font-weight:normal;">$275,000</div>
<div class="t" style="left:1423.5px;width:182.0px;text-align:center;top:563.0px;font-size:14px;color:#444;font-weight:normal;">$150,000</div>
<div class="t" style="left:1605.5px;width:182.0px;text-align:center;top:563.0px;font-size:14px;color:#444;font-weight:normal;">$325,000</div>
<div class="t" style="left:1787.5px;width:182.0px;text-align:center;top:563.0px;font-size:14px;color:#444;font-weight:normal;">$175,000</div>
<div class="t" style="left:648px;top:591.0px;font-size:14px;color:#444;font-weight:normal;">Total gross lease cost</div>
<div class="t" style="left:877.5px;width:182.0px;text-align:center;top:591.0px;font-size:14px;color:#444;font-weight:normal;">$13,247,155</div>
<div class="t" style="left:1059.5px;width:182.0px;text-align:center;top:591.0px;font-size:14px;color:#444;font-weight:normal;">$17,001,940</div>
<div class="t" style="left:1241.5px;width:182.0px;text-align:center;top:591.0px;font-size:14px;color:#444;font-weight:normal;">$17,656,809</div>
<div class="t" style="left:1423.5px;width:182.0px;text-align:center;top:591.0px;font-size:14px;color:#444;font-weight:normal;">$18,741,309</div>
<div class="t" style="left:1605.5px;width:182.0px;text-align:center;top:591.0px;font-size:14px;color:#444;font-weight:normal;">$19,399,471</div>
<div class="t" style="left:1787.5px;width:182.0px;text-align:center;top:591.0px;font-size:14px;color:#444;font-weight:normal;">$20,732,413</div>
<div class="a" style="left:638px;top:612px;width:1331px;height:28px;background:#f6f6f6"></div>
<div class="t" style="left:648px;top:619.0px;font-size:14px;color:#333;font-weight:bold;">DIFFERENCE</div>
<div class="t" style="left:877.5px;width:182.0px;text-align:center;top:619.0px;font-size:14px;color:#333;font-weight:bold;">$0</div>
<div class="t" style="left:1059.5px;width:182.0px;text-align:center;top:619.0px;font-size:14px;color:#333;font-weight:bold;">$-3,754,785</div>
<div class="t" style="left:1241.5px;width:182.0px;text-align:center;top:619.0px;font-size:14px;color:#333;font-weight:bold;">$-4,409,654</div>
<div class="t" style="left:1423.5px;width:182.0px;text-align:center;top:619.0px;font-size:14px;color:#333;font-weight:bold;">$-5,494,154</div>
<div class="t" style="left:1605.5px;width:182.0px;text-align:center;top:619.0px;font-size:14px;color:#333;font-weight:bold;">$-6,152,316</div>
<div class="t" style="left:1787.5px;width:182.0px;text-align:center;top:619.0px;font-size:14px;color:#333;font-weight:bold;">$-7,485,258</div>
<div class="a" style="left:638px;top:655px;width:1331px;height:1px;background:#e6e6e6"></div>
<div class="t" style="left:638px;top:676.6px;font-size:14px;color:#111;font-weight:bold;">Lease Options</div>
<div class="t" style="left:648px;top:709.4px;font-size:14px;color:#444;font-weight:normal;">Cancellation</div>
<svg class="a" style="left:962.5px;top:711.6px" width="12" height="12" viewBox="0 0 12 12" fill="none" stroke="#e5233d" stroke-width="1.6" stroke-linecap="round"><path d="M1.5 1.5L10.5 10.5M10.5 1.5L1.5 10.5"/></svg>
<svg class="a" style="left:1143.0px;top:711.6px" width="15" height="12" viewBox="0 0 15 12" fill="none" stroke="#22b35e" stroke-width="1.5" stroke-linecap="round" stroke-linejoin="round"><path d="M1.5 6.3L5.3 10L13.5 2"/></svg>
<svg class="a" style="left:1325.0px;top:711.6px" width="15" height="12" viewBox="0 0 15 12" fill="none" stroke="#22b35e" stroke-width="1.5" stroke-linecap="round" stroke-linejoin="round"><path d="M1.5 6.3L5.3 10L13.5 2"/></svg>
<svg class="a" style="left:1508.5px;top:711.6px" width="12" height="12" viewBox="0 0 12 12" fill="none" stroke="#e5233d" stroke-width="1.6" stroke-linecap="round"><path d="M1.5 1.5L10.5 10.5M10.5 1.5L1.5 10.5"/></svg>
<svg class="a" style="left:1689.0px;top:711.6px" width="15" height="12" viewBox="0 0 15 12" fill="none" stroke="#22b35e" stroke-width="1.5" stroke-linecap="round" stroke-linejoin="round"><path d="M1.5 6.3L5.3 10L13.5 2"/></svg>
<svg class="a" style="left:1871.0px;top:711.6px" width="15" height="12" viewBox="0 0 15 12" fill="none" stroke="#22b35e" stroke-width="1.5" stroke-linecap="round" stroke-linejoin="round"><path d="M1.5 6.3L5.3 10L13.5 2"/></svg>
<div class="a" style="left:638px;top:731.2px;width:1331px;height:29.75px;background:#f6f6f6"></div>
<div class="t" style="left:648px;top:739.1px;font-size:14px;color:#444;font-weight:normal;">ROFO/ROFR</div>
<svg class="a" style="left:961.0px;top:741.3px" width="15" height="12" viewBox="0 0 15 12" fill="none" stroke="#22b35e" stroke-width="1.5" stroke-linecap="round" stroke-linejoin="round"><path d="M1.5 6.3L5.3 10L13.5 2"/></svg>
<svg class="a" style="left:1143.0px;top:741.3px" width="15" height="12" viewBox="0 0 15 12" fill="none" stroke="#22b35e" stroke-width="1.5" stroke-linecap="round" stroke-linejoin="round"><path d="M1.5 6.3L5.3 10L13.5 2"/></svg>
<svg class="a" style="left:1325.0px;top:741.3px" width="15" height="12" viewBox="0 0 15 12" fill="none" stroke="#22b35e" stroke-width="1.5" stroke-linecap="round" stroke-linejoin="round"><path d="M1.5 6.3L5.3 10L13.5 2"/></svg>
<svg class="a" style="left:1507.0px;top:741.3px" width="15" height="12" viewBox="0 0 15 12" fill="none" stroke="#22b35e" stroke-width="1.5" stroke-linecap="round" stroke-linejoin="round"><path d="M1.5 6.3L5.3 10L13.5 2"/></svg>
<svg class="a" style="left:1689.0px;top:741.3px" width="15" height="12" viewBox="0 0 15 12" fill="none" stroke="#22b35e" stroke-width="1.5" stroke-linecap="round" stroke-linejoin="round"><path d="M1.5 6.3L5.3 10L13.5 2"/></svg>
<svg class="a" style="left:1871.0px;top:741.3px" width="15" height="12" viewBox="0 0 15 12" fill="none" stroke="#22b35e" stroke-width="1.5" stroke-linecap="round" stroke-linejoin="round"><path d="M1.5 6.3L5.3 10L13.5 2"/></svg>
<div class="t" style="left:648px;top:768.9px;font-size:14px;color:#444;font-weight:normal;">Expansion</div>
<svg class="a" style="left:962.5px;top:771.1px" width="12" height="12" viewBox="0 0 12 12" fill="none" stroke="#e5233d" stroke-width="1.6" stroke-linecap="round"><path d="M1.5 1.5L10.5 10.5M10.5 1.5L1.5 10.5"/></svg>
<svg class="a" style="left:1143.0px;top:771.1px" width="15" height="12" viewBox="0 0 15 12" fill="none" stroke="#22b35e" stroke-width="1.5" stroke-linecap="round" stroke-linejoin="round"><path d="M1.5 6.3L5.3 10L13.5 2"/></svg>
<svg class="a" style="left:1325.0px;top:771.1px" width="15" height="12" viewBox="0 0 15 12" fill="none" stroke="#22b35e" stroke-width="1.5" stroke-linecap="round" stroke-linejoin="round"><path d="M1.5 6.3L5.3 10L13.5 2"/></svg>
<svg class="a" style="left:1507.0px;top:771.1px" width="15" height="12" viewBox="0 0 15 12" fill="none" stroke="#22b35e" stroke-width="1.5" stroke-linecap="round" stroke-linejoin="round"><path d="M1.5 6.3L5.3 10L13.5 2"/></svg>
<svg class="a" style="left:1689.0px;top:771.1px" width="15" height="12" viewBox="0 0 15 12" fill="none" stroke="#22b35e" stroke-width="1.5" stroke-linecap="round" stroke-linejoin="round"><path d="M1.5 6.3L5.3 10L13.5 2"/></svg>
<svg class="a" style="left:1871.0px;top:771.1px" width="15" height="12" viewBox="0 0 15 12" fill="none" stroke="#22b35e" stroke-width="1.5" stroke-linecap="round" stroke-linejoin="round"><path d="M1.5 6.3L5.3 10L13.5 2"/></svg>
<div class="a" style="left:638px;top:790.8px;width:1331px;height:29.75px;background:#f6f6f6"></div>
<div class="t" style="left:648px;top:798.6px;font-size:14px;color:#444;font-weight:normal;">Renewal</div>
<svg class="a" style="left:961.0px;top:800.8px" width="15" height="12" viewBox="0 0 15 12" fill="none" stroke="#22b35e" stroke-width="1.5" stroke-linecap="round" stroke-linejoin="round"><path d="M1.5 6.3L5.3 10L13.5 2"/></svg>
<svg class="a" style="left:1143.0px;top:800.8px" width="15" height="12" viewBox="0 0 15 12" fill="none" stroke="#22b35e" stroke-width="1.5" stroke-linecap="round" stroke-linejoin="round"><path d="M1.5 6.3L5.3 10L13.5 2"/></svg>
<svg class="a" style="left:1325.0px;top:800.8px" width="15" height="12" viewBox="0 0 15 12" fill="none" stroke="#22b35e" stroke-width="1.5" stroke-linecap="round" stroke-linejoin="round"><path d="M1.5 6.3L5.3 10L13.5 2"/></svg>
<svg class="a" style="left:1507.0px;top:800.8px" width="15" height="12" viewBox="0 0 15 12" fill="none" stroke="#22b35e" stroke-width="1.5" stroke-linecap="round" stroke-linejoin="round"><path d="M1.5 6.3L5.3 10L13.5 2"/></svg>
<svg class="a" style="left:1689.0px;top:800.8px" width="15" height="12" viewBox="0 0 15 12" fill="none" stroke="#22b35e" stroke-width="1.5" stroke-linecap="round" stroke-linejoin="round"><path d="M1.5 6.3L5.3 10L13.5 2"/></svg>
<svg class="a" style="left:1871.0px;top:800.8px" width="15" height="12" viewBox="0 0 15 12" fill="none" stroke="#22b35e" stroke-width="1.5" stroke-linecap="round" stroke-linejoin="round"><path d="M1.5 6.3L5.3 10L13.5 2"/></svg>
<div class="t" style="left:648px;top:828.4px;font-size:14px;color:#444;font-weight:normal;">Rent abatement conversion</div>
<svg class="a" style="left:961.0px;top:830.6px" width="15" height="12" viewBox="0 0 15 12" fill="none" stroke="#22b35e" stroke-width="1.5" stroke-linecap="round" stroke-linejoin="round"><path d="M1.5 6.3L5.3 10L13.5 2"/></svg>
<svg class="a" style="left:1143.0px;top:830.6px" width="15" height="12" viewBox="0 0 15 12" fill="none" stroke="#22b35e" stroke-width="1.5" stroke-linecap="round" stroke-linejoin="round"><path d="M1.5 6.3L5.3 10L13.5 2"/></svg>
<svg class="a" style="left:1325.0px;top:830.6px" width="15" height="12" viewBox="0 0 15 12" fill="none" stroke="#22b35e" stroke-width="1.5" stroke-linecap="round" stroke-linejoin="round"><path d="M1.5 6.3L5.3 10L13.5 2"/></svg>
<svg class="a" style="left:1507.0px;top:830.6px" width="15" height="12" viewBox="0 0 15 12" fill="none" stroke="#22b35e" stroke-width="1.5" stroke-linecap="round" stroke-linejoin="round"><path d="M1.5 6.3L5.3 10L13.5 2"/></svg>
<svg class="a" style="left:1689.0px;top:830.6px" width="15" height="12" viewBox="0 0 15 12" fill="none" stroke="#22b35e" stroke-width="1.5" stroke-linecap="round" stroke-linejoin="round"><path d="M1.5 6.3L5.3 10L13.5 2"/></svg>
<svg class="a" style="left:1871.0px;top:830.6px" width="15" height="12" viewBox="0 0 15 12" fill="none" stroke="#22b35e" stroke-width="1.5" stroke-linecap="round" stroke-linejoin="round"><path d="M1.5 6.3L5.3 10L13.5 2"/></svg>
<div class="a" style="left:1466px;top:868px;width:97px;height:33px;border:1px solid #555;border-radius:6px;background:#fff"></div>
<div class="t" style="left:1466px;width:97px;text-align:center;top:878.2px;font-size:12px;color:#333;font-weight:normal;">Edit responses</div>
<div class="a" style="left:638px;top:923px;width:1331px;height:1px;background:#e6e6e6"></div>
<div class="t" style="left:638px;top:944.8px;font-size:14px;color:#111;font-weight:bold;transform:scaleX(1.043);transform-origin:0 0">Legal / Amenity Comparison</div>
<div class="t" style="left:648px;top:975.0px;font-size:14px;color:#444;font-weight:normal;">Agree to lease terms</div>
<div class="t" style="left:877.5px;width:182.0px;text-align:center;top:975.0px;font-size:14px;color:#444;font-weight:normal;">95.65%</div>
<div class="t" style="left:1059.5px;width:182.0px;text-align:center;top:975.0px;font-size:14px;color:#444;font-weight:normal;">82.61%</div>
<div class="t" style="left:1241.5px;width:182.0px;text-align:center;top:975.0px;font-size:14px;color:#444;font-weight:normal;">95.65%</div>
<div class="t" style="left:1423.5px;width:182.0px;text-align:center;top:975.0px;font-size:14px;color:#444;font-weight:normal;">100%</div>
<div class="t" style="left:1605.5px;width:182.0px;text-align:center;top:975.0px;font-size:14px;color:#444;font-weight:normal;">97.83%</div>
<div class="t" style="left:1787.5px;width:182.0px;text-align:center;top:975.0px;font-size:14px;color:#444;font-weight:normal;">93.48%</div>
<div class="a" style="left:638px;top:996px;width:1331px;height:28px;background:#f6f6f6"></div>
<div class="t" style="left:648px;top:1003.0px;font-size:14px;color:#444;font-weight:normal;">Amenity score</div>
<div class="t" style="left:877.5px;width:182.0px;text-align:center;top:1003.0px;font-size:14px;color:#444;font-weight:normal;">88.25</div>
<div class="t" style="left:1059.5px;width:182.0px;text-align:center;top:1003.0px;font-size:14px;color:#444;font-weight:normal;">93.8</div>
<div class="t" style="left:1241.5px;width:182.0px;text-align:center;top:1003.0px;font-size:14px;color:#444;font-weight:normal;">81.4</div>
<div class="t" style="left:1423.5px;width:182.0px;text-align:center;top:1003.0px;font-size:14px;color:#444;font-weight:normal;">86.35</div>
<div class="t" style="left:1605.5px;width:182.0px;text-align:center;top:1003.0px;font-size:14px;color:#444;font-weight:normal;">78.2</div>
<div class="t" style="left:1787.5px;width:182.0px;text-align:center;top:1003.0px;font-size:14px;color:#444;font-weight:normal;">89</div>
<div class="a" style="left:1466px;top:1042.5px;width:97px;height:33px;border:1px solid #555;border-radius:6px;background:#fff"></div>
<div class="t" style="left:1466px;width:97px;text-align:center;top:1052.8px;font-size:12px;color:#333;font-weight:normal;">Edit responses</div>
<div id="hsh" class="a"></div>
</body></html>
